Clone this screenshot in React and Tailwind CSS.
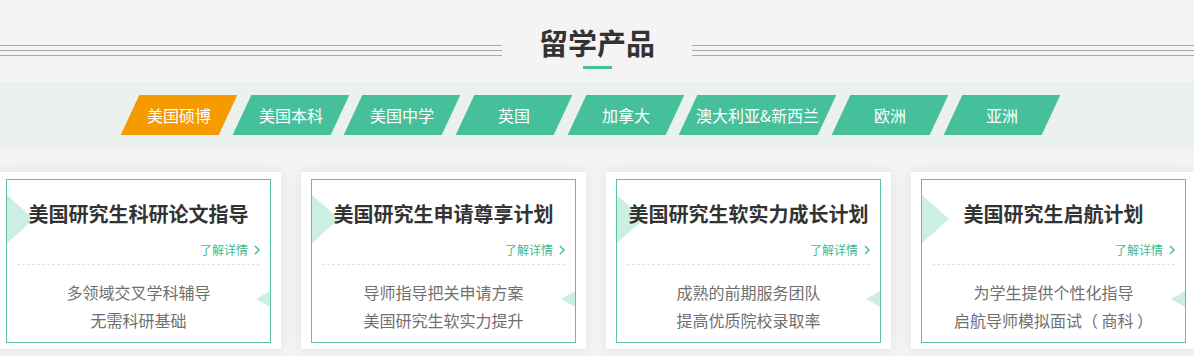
import React from "react";

const tabs = [
    { name: "美国硕博", active: true },
    { name: "美国本科" },
    { name: "美国中学" },
    { name: "英国" },
    { name: "加拿大" },
    { name: "澳大利亚&新西兰", wide: true },
    { name: "欧洲" },
    { name: "亚洲" },
];

const products = [
    { title: "美国研究生科研论文指导", lines: ["多领域交叉学科辅导", "无需科研基础"] },
    { title: "美国研究生申请尊享计划", lines: ["导师指导把关申请方案", "美国研究生软实力提升"] },
    { title: "美国研究生软实力成长计划", lines: ["成熟的前期服务团队", "提高优质院校录取率"] },
    { title: "美国研究生启航计划", lines: ["为学生提供个性化指导", "启航导师模拟面试（ 商科 ）"] },
];

const Lines = () => (
    <div className="flex-1 mt-[18px] flex flex-col gap-[4px]">
        <div className="h-px bg-[#aaaaaa]"></div>
        <div className="h-px bg-[#aaaaaa]"></div>
        <div className="h-px bg-[#aaaaaa]"></div>
    </div>
);

const ProductCard = ({ title, lines }) => (
    <div className="w-[285px] shrink-0 bg-white pt-[7px] px-[10px] pb-[6px] shadow-[0_0_12px_rgba(40,120,90,0.12)]">
        <div className="relative border border-[#5cc3a0] px-[10px] pt-[19px] pb-[8px]">
            <div className="absolute left-0 top-[15px] w-0 h-0 border-y-[24px] border-y-transparent border-l-[27px] border-l-[#cdeee3]"></div>
            <div className="absolute right-0 top-[111px] w-0 h-0 border-y-[8px] border-y-transparent border-r-[14px] border-r-[#cdeee3]"></div>
            <h3 className="relative text-center text-[20px] leading-[30px] font-bold text-[#333333] whitespace-nowrap">{title}</h3>
            <div className="mt-[11px] h-[20px] flex items-center justify-end gap-[6px] text-[12px] leading-[20px] text-[#3dba8f]">
                <span>了解详情</span>
                <svg width="6" height="10" viewBox="0 0 6 10" fill="none">
                    <path d="M1 1l4 4-4 4" stroke="#3dba8f" strokeWidth="1.4" />
                </svg>
            </div>
            <div className="mt-[4px] border-t border-dashed border-[#e2e2e2]"></div>
            <div className="mt-[13px] text-center text-[16px] leading-[28px] text-[#707070] whitespace-nowrap">
                {lines.map((line) => (
                    <p key={line}>{line}</p>
                ))}
            </div>
        </div>
    </div>
);

const App = () => {
    return (
        <div
            className="w-full h-[356px] overflow-hidden bg-[#f4f4f4]"
            style={{ fontFamily: '"Noto Sans CJK SC", "Noto Sans", sans-serif' }}
        >
            {/* 标题 */}
            <div className="pt-[27px] pb-[13px] flex items-start gap-[37px]">
                <Lines />
                <div className="flex flex-col items-center">
                    <h2 className="text-[29px] leading-[30px] font-bold text-[#333333] whitespace-nowrap">留学产品</h2>
                    <div className="mt-[9px] w-[29px] h-[3px] bg-[#46bf9b]"></div>
                </div>
                <Lines />
            </div>

            {/* 分类 */}
            <div className="h-[66px] bg-[#ebf1ee] flex items-center pl-[130px] gap-[13.7px]">
                {tabs.map((tab) => (
                    <div
                        key={tab.name}
                        className={`h-[40px] shrink-0 ${tab.wide ? "w-[139px]" : "w-[98px]"} ${tab.active ? "bg-[#f59b00]" : "bg-[#46bf9b]"} skew-x-[-25deg] flex items-center justify-center`}
                    >
                        <span className="skew-x-[25deg] text-white text-[16px] whitespace-nowrap">{tab.name}</span>
                    </div>
                ))}
            </div>

            {/* 产品 */}
            <div className="mt-[24px] ml-[-4px] flex gap-[20px]">
                {products.map((p) => (
                    <ProductCard key={p.title} title={p.title} lines={p.lines} />
                ))}
            </div>
        </div>
    );
};

export default App;
